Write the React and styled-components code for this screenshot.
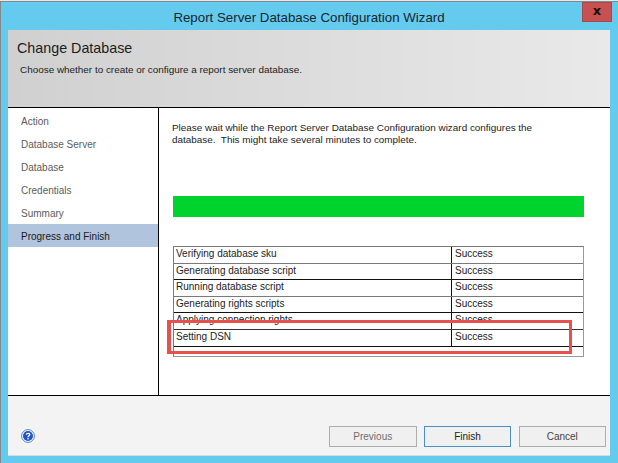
import React from "react";
import styled, { createGlobalStyle } from "styled-components";

const steps = ["Action", "Database Server", "Database", "Credentials", "Summary", "Progress and Finish"];

const tasks = [
  { name: "Verifying database sku", line: "#7a7a7a" },
  { name: "Generating database script", line: "#111" },
  { name: "Running database script", line: "#7a7a7a" },
  { name: "Generating rights scripts", line: "#111" },
  { name: "Applying connection rights", line: "#333" },
  { name: "Setting DSN", line: "#111" },
];

const App = () => {
  return (
    <>
      <GlobalStyle />
      <Window>
        <TitleBar>
          <Title>Report Server Database Configuration Wizard</Title>
          <CloseButton>x</CloseButton>
        </TitleBar>

        <Header>
          <Heading>Change Database</Heading>
          <SubHeading>Choose whether to create or configure a report server database.</SubHeading>
        </Header>

        <Main>
          <Sidebar>
            {steps.map((step, i) => (
              <Step key={step} $active={i === steps.length - 1}>
                {step}
              </Step>
            ))}
          </Sidebar>

          <Content>
            <Message>
              Please wait while the Report Server Database Configuration wizard configures the
              <br />
              database.&nbsp; This might take several minutes to complete.
            </Message>
            <Progress />
            <TaskTable>
              {tasks.map((task) => (
                <TaskRow key={task.name} $line={task.line}>
                  <TaskName>{task.name}</TaskName>
                  <TaskStatus>Success</TaskStatus>
                </TaskRow>
              ))}
              <EmptyRow />
            </TaskTable>
            <Highlight />
          </Content>
        </Main>

        <Footer>
          <HelpIcon viewBox="0 0 14 14">
            <circle cx="7" cy="7" r="6.4" fill="#fff" stroke="#4f7fd0" strokeWidth="1" />
            <circle cx="7" cy="7" r="5" fill="#1f55c8" />
            <path d="M5.3 5.6 C5.4 3.9 8.8 3.8 8.8 5.6 C8.8 6.8 7 6.8 7 8.2" fill="none" stroke="#fff" strokeWidth="1.3" />
            <rect x="6.3" y="9" width="1.4" height="1.4" fill="#fff" />
          </HelpIcon>
          <Buttons>
            <Button $muted>Previous</Button>
            <Button $primary>Finish</Button>
            <Button>Cancel</Button>
          </Buttons>
        </Footer>
      </Window>
    </>
  );
};

const GlobalStyle = createGlobalStyle`
  html, body {
    margin: 0;
    padding: 0;
    background: #e9e9e9;
  }

  body {
    font-family: "Liberation Sans", Arial, sans-serif;
  }
`;

const Window = styled.div`
  box-sizing: border-box;
  width: 618px;
  height: 462px;
  margin: 1px 0 0 0;
  padding: 0 8px 7px 7px;
  display: flex;
  flex-direction: column;
  background: #64cbee;
  border-top: 1px solid #7f8a90;
  border-left: 1px solid #7f8a90;
`;

const TitleBar = styled.div`
  position: relative;
  flex: none;
  height: 28px;
  display: flex;
  align-items: center;
  justify-content: center;
`;

const Title = styled.div`
  font-size: 13.3px;
  color: #17262f;
  padding-top: 2px;
`;

const CloseButton = styled.div`
  position: absolute;
  top: 0;
  right: -2px;
  width: 30px;
  height: 20px;
  background: #c75050;
  border: 1px solid #a94a4a;
  box-sizing: border-box;
  color: #1a1010;
  font: bold 13px/15px "DejaVu Sans", sans-serif;
  text-align: center;
`;

const Header = styled.div`
  flex: none;
  box-sizing: border-box;
  height: 78px;
  padding: 9px 0 0 9px;
  background: linear-gradient(90deg, #d0d0d0, #e9e9e9);
  border-bottom: 1px solid #000;
`;

const Heading = styled.div`
  font-size: 14.3px;
  line-height: 18px;
  color: #1c1c1c;
`;

const SubHeading = styled.div`
  margin: 6px 0 0 3px;
  font-size: 9.92px;
  line-height: 13px;
  color: #1c1c1c;
`;

const Main = styled.div`
  flex: none;
  box-sizing: border-box;
  height: 288px;
  display: flex;
  background: #fff;
  border-bottom: 1px solid #000;
`;

const Sidebar = styled.div`
  flex: none;
  box-sizing: border-box;
  width: 151px;
  padding-top: 1px;
  border-right: 1px solid #000;
`;

const Step = styled.div`
  height: 23px;
  padding-left: 13px;
  font-size: 10px;
  line-height: 26px;
  color: ${({ $active }) => ($active ? "#1a1a1a" : "#5c5c5c")};
  background: ${({ $active }) => ($active ? "#b0c4de" : "transparent")};
`;

const Content = styled.div`
  position: relative;
  flex: 1;
  padding: 14px 26px 0 14px;
`;

const Message = styled.div`
  margin-left: -1px;
  font-size: 9.92px;
  line-height: 12px;
  color: #1c1c1c;
`;

const Progress = styled.div`
  height: 21px;
  margin-top: 50px;
  background: #00d32d;
`;

const TaskTable = styled.div`
  margin-top: 29px;
  border: 1px solid #7a7a7a;
  border-bottom-color: #999;
  border-right-color: #999;
`;

const TaskRow = styled.div`
  display: flex;
  height: 16.6px;
  box-sizing: border-box;
  border-bottom: 1px solid ${({ $line }) => $line};
  font-size: 10px;
  line-height: 13px;
  color: #1c1c1c;
`;

const TaskName = styled.div`
  box-sizing: border-box;
  width: 278px;
  padding-left: 2px;
  border-right: 1px solid #111;
`;

const TaskStatus = styled.div`
  padding-left: 3px;
`;

const EmptyRow = styled.div`
  height: 9px;
`;

const Highlight = styled.div`
  position: absolute;
  top: 212px;
  left: 8px;
  width: 405px;
  height: 34px;
  box-sizing: border-box;
  border: 3px solid #e8504b;
  border-left-width: 4px;
`;

const Footer = styled.div`
  flex: 1;
  display: flex;
  align-items: flex-end;
  justify-content: space-between;
  padding: 0 4px 8px 13px;
  background: #f3f3f3;
  border-bottom: 1px solid #d8dcde;
`;

const HelpIcon = styled.svg`
  width: 14px;
  height: 14px;
  margin-bottom: 4px;
`;

const Buttons = styled.div`
  display: flex;
  gap: 7.25px;
`;

const Button = styled.div`
  box-sizing: border-box;
  width: 87.5px;
  height: 21px;
  background: #f0f0f0;
  border: 1px solid ${({ $primary }) => ($primary ? "#4a90c4" : "#adadad")};
  font-size: 10px;
  line-height: 19px;
  text-align: center;
  color: ${({ $primary, $muted }) => ($primary ? "#1c1c1c" : $muted ? "#6d6d6d" : "#444")};
`;

export default App;
